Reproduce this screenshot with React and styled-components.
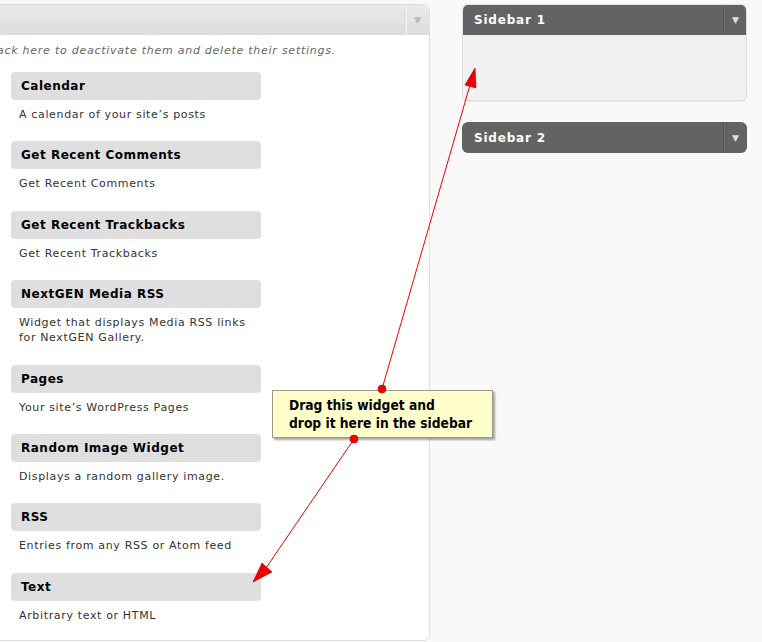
import React from "react"
import styled, { createGlobalStyle } from "styled-components"

const GlobalStyle = createGlobalStyle`
  html, body {
    margin: 0;
    padding: 0;
    background: #f9f9f9;
    font-family: "DejaVu Sans", Verdana, sans-serif;
    overflow: hidden;
  }
`

const widgets = [
  { title: "Calendar", desc: ["A calendar of your site’s posts"] },
  { title: "Get Recent Comments", desc: ["Get Recent Comments"] },
  { title: "Get Recent Trackbacks", desc: ["Get Recent Trackbacks"] },
  {
    title: "NextGEN Media RSS",
    desc: ["Widget that displays Media RSS links", "for NextGEN Gallery."],
  },
  { title: "Pages", desc: ["Your site’s WordPress Pages"] },
  { title: "Random Image Widget", desc: ["Displays a random gallery image."] },
  { title: "RSS", desc: ["Entries from any RSS or Atom feed"] },
  { title: "Text", desc: ["Arbitrary text or HTML"] },
]

const Page = styled.div`
  position: relative;
  width: 762px;
  height: 642px;
  display: grid;
  grid-template-columns: 430px 1fr;
  column-gap: 33px;
  align-items: start;
  padding-top: 4px;
  box-sizing: border-box;
`

const WidgetsPanel = styled.section`
  margin-left: -20px;
  background: #fff;
  border: 1px solid #dfdfdf;
  border-radius: 0 6px 6px 0;
  height: 637px;
  box-sizing: border-box;
`

const PanelHead = styled.div`
  display: flex;
  justify-content: flex-end;
  height: 30px;
  background: linear-gradient(to bottom, #e9e9e9, #dcdcdc);
  border-radius: 0 6px 0 0;
`

const Toggle = styled.div`
  width: 23px;
  display: flex;
  align-items: center;
  justify-content: center;
  border-left: 1px solid ${p => (p.dark ? "#555" : "#e4e4e4")};
  box-shadow: ${p => (p.dark ? "inset 1px 0 0 #6c6c6c" : "inset 1px 0 0 #f4f4f4")};
  color: ${p => (p.dark ? "#ddd" : "#bbb")};
  font-size: 9px;
`

const Hint = styled.div`
  display: flex;
  justify-content: flex-end;
  white-space: nowrap;
  padding-right: 93px;
  margin-top: 9px;
  font-size: 11px;
  font-style: italic;
  color: #666;
  letter-spacing: 0.75px;
`

const WidgetList = styled.div`
  padding: 15px 0 0 30px;
  display: flex;
  flex-direction: column;
`

const Widget = styled.div`
  height: ${p => (p.tall ? "85px" : "69.3px")};
`

const WidgetTitle = styled.div`
  width: 250px;
  height: 28px;
  box-sizing: border-box;
  background: #dfdfdf;
  border-radius: 4px;
  padding: 0 10px;
  display: flex;
  align-items: center;
  font-size: 12px;
  font-weight: bold;
  color: #000;
  letter-spacing: 0.5px;
`

const WidgetDesc = styled.div`
  padding: 7px 8px 0;
  font-size: 11px;
  line-height: 15px;
  color: #333;
  letter-spacing: 0.65px;
`

const Sidebars = styled.div`
  width: 285px;
  margin-left: -1px;
  display: flex;
  flex-direction: column;
  gap: 21px;
`

const SidebarBox = styled.div`
  border-radius: 6px;
  overflow: hidden;
  background: #f1f1f1;
  border: ${p => (p.open ? "1px solid #e0e0e0" : "none")};
  box-shadow: ${p => (p.open ? "0 1px 0 #e6e6e6" : "none")};
`

const SidebarHead = styled.div`
  display: flex;
  height: 31px;
  margin: ${p => (p.open ? "-1px -1px 0" : "0")};
  background: #636363;
  color: #fff;
`

const SidebarName = styled.div`
  flex: 1;
  display: flex;
  align-items: center;
  padding-left: 12px;
  font-size: 12px;
  font-weight: bold;
  letter-spacing: 0.8px;
`

const SidebarBody = styled.div`
  height: 65px;
`

const Callout = styled.div`
  position: absolute;
  left: 272px;
  top: 390px;
  width: 221px;
  height: 48px;
  box-sizing: border-box;
  background: #ffffcc;
  border: 1px solid #9a9a8a;
  box-shadow: 2px 2px 2px rgba(0, 0, 0, 0.35);
  padding: 5px 0 0 16px;
  font-family: "DejaVu Sans Condensed", "DejaVu Sans", Tahoma, sans-serif;
  font-weight: bold;
  font-size: 13.7px;
  line-height: 18px;
  color: #000;
`

const Arrows = styled.svg`
  position: absolute;
  left: 0;
  top: 0;
  pointer-events: none;
`

export default function App() {
  return (
    <>
      <GlobalStyle />
      <Page>
        <WidgetsPanel>
          <PanelHead>
            <Toggle>▼</Toggle>
          </PanelHead>
          <Hint>
            Drag widgets from here to a sidebar on the right to activate them.
            Drag widgets back here to deactivate them and delete their settings.
          </Hint>
          <WidgetList>
            {widgets.map(w => (
              <Widget key={w.title} tall={w.desc.length > 1}>
                <WidgetTitle>{w.title}</WidgetTitle>
                <WidgetDesc>
                  {w.desc.map(line => (
                    <div key={line}>{line}</div>
                  ))}
                </WidgetDesc>
              </Widget>
            ))}
          </WidgetList>
        </WidgetsPanel>

        <Sidebars>
          <SidebarBox open>
            <SidebarHead open>
              <SidebarName>Sidebar 1</SidebarName>
              <Toggle dark>▼</Toggle>
            </SidebarHead>
            <SidebarBody />
          </SidebarBox>
          <SidebarBox>
            <SidebarHead>
              <SidebarName>Sidebar 2</SidebarName>
              <Toggle dark>▼</Toggle>
            </SidebarHead>
          </SidebarBox>
        </Sidebars>

        <Callout>
          Drag this widget and
          <br />
          drop it here in the sidebar
        </Callout>

        <Arrows width="762" height="642" viewBox="0 0 762 642">
          <line x1="382" y1="389" x2="470" y2="85" stroke="#e00" strokeWidth="1" />
          <polygon points="475,68 465,85 476,88" fill="#e00" stroke="#900" strokeWidth="0.6" />
          <circle cx="382" cy="389" r="4" fill="#e00" stroke="#b00" strokeWidth="0.6" />
          <line x1="354" y1="439" x2="266" y2="568" stroke="#e00" strokeWidth="1" />
          <polygon points="253,582 262,563 272,572" fill="#e00" stroke="#900" strokeWidth="0.6" />
          <circle cx="354" cy="439" r="4" fill="#e00" stroke="#b00" strokeWidth="0.6" />
        </Arrows>
      </Page>
    </>
  )
}
